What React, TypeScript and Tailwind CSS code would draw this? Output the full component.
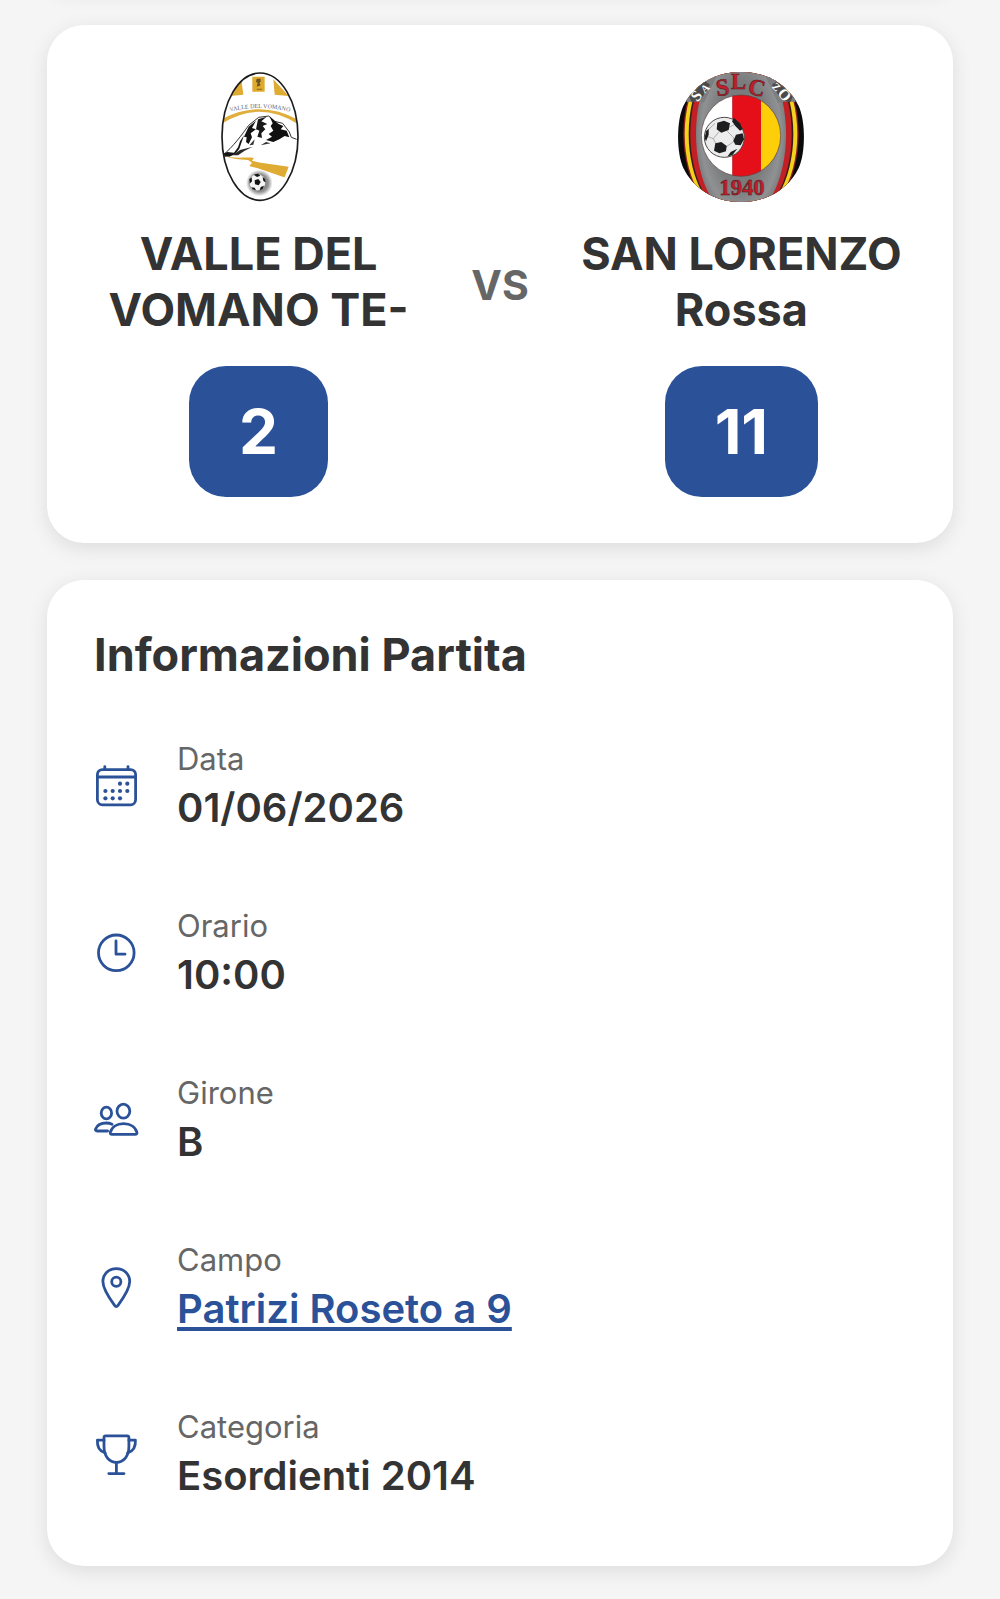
import type { ReactNode } from "react";

const iconClass = "size-[46px] shrink-0 text-[#2b5298]";

function Icon({ children }: { children: ReactNode }) {
  return (
    <svg
      viewBox="1 0 46 46"
      fill="none"
      stroke="currentColor"
      strokeWidth="2.8"
      strokeLinecap="round"
      strokeLinejoin="round"
      className={iconClass}
      aria-hidden="true"
    >
      {children}
    </svg>
  );
}

const CalendarIcon = () => (
  <Icon>
    <rect x="4.4" y="6.6" width="38.2" height="35.2" rx="5" />
    <path d="M4.4 14H42.6M11.8 3.6V6M35 3.6V6" />
    <g fill="currentColor" stroke="none">
      <circle cx="27" cy="20.7" r="2.1" />
      <circle cx="34.3" cy="20.7" r="2.1" />
      <circle cx="12.4" cy="28" r="2.1" />
      <circle cx="19.7" cy="28" r="2.1" />
      <circle cx="27" cy="28" r="2.1" />
      <circle cx="34.3" cy="28" r="2.1" />
      <circle cx="12.4" cy="35.3" r="2.1" />
      <circle cx="19.7" cy="35.3" r="2.1" />
      <circle cx="27" cy="35.3" r="2.1" />
    </g>
  </Icon>
);

const ClockIcon = () => (
  <Icon>
    <circle cx="23.3" cy="22.8" r="17.8" />
    <path d="M23 11V24.2H32" />
  </Icon>
);

const PeopleIcon = () => (
  <Icon>
    <ellipse cx="30.4" cy="14.2" rx="6.4" ry="7" />
    <ellipse cx="13.4" cy="16" rx="5.2" ry="5.9" />
    <path d="M19 37.4H42.2C43.6 37.4 44.2 36.6 43.9 35.4C42.6 30.2 37.6 26.6 30.6 26.6S18.6 30.2 17.3 35.4C17 36.6 17.6 37.4 19 37.4Z" />
    <path d="M14.6 34H4.2C2.8 34 2.2 33.2 2.6 32C4 28.4 8 26 13.4 26C15.6 26 17.4 26.4 19 27.2" />
  </Icon>
);

const PinIcon = () => (
  <Icon>
    <path d="M23.3 42.6C22.6 42.6 22 42 21.4 41.2C16 33.8 9.9 24.6 9.9 17.6C9.9 10 15.8 4.6 23.3 4.6S36.7 10 36.7 17.6C36.7 24.6 30.6 33.8 25.2 41.2C24.6 42 24 42.6 23.3 42.6Z" />
    <circle cx="23.3" cy="17.8" r="4.6" />
  </Icon>
);

const TrophyIcon = () => (
  <Icon>
    <path d="M12.6 4.8H34.2C35.2 4.8 35.9 5.4 35.9 6.4V15.6C35.9 25.4 30.6 31.4 23.4 31.4S11 25.4 11 15.6V6.4C11 5.4 11.6 4.8 12.6 4.8Z" />
    <path d="M11 9.2H4.4C4 15.6 6.6 20.4 12.2 22M35.9 9.2H42.4C42.8 15.6 40.2 20.4 34.6 22" />
    <path d="M23.4 31.4V42.6M15.8 42.6H31" />
  </Icon>
);

function ValleLogo() {
  return (
    <svg viewBox="-16 36 390 390" className="size-[130px] overflow-visible" role="img" aria-label="Valle del Vomano">
      <defs>
        <clipPath id="valle-oval">
          <ellipse cx="182" cy="230" rx="113" ry="191" />
        </clipPath>
        <path id="valle-arc" d="M80 158Q182 130 284 158" />
        <radialGradient id="valle-glow">
          <stop offset="65%" stopColor="#8d8d8d" />
          <stop offset="100%" stopColor="#ffffff" />
        </radialGradient>
      </defs>
      <g clipPath="url(#valle-oval)">
        <rect x="60" y="36" width="240" height="390" fill="#fff" />
        <path d="M92 108L126 58L132 104Z" fill="#dfab32" />
        <path d="M222 58L268 108L226 104Z" fill="#dfab32" />
        <path d="M159 50H196V95H159Z" fill="#dfa92c" />
        <path d="M172 56L184 56L184 66L180 68L184 76L172 80L175 68L170 66Z" fill="#6b5327" />
        <path d="M172 86H188V90H172Z" fill="#9b7527" />
        <path d="M66 192Q180 118 298 194L298 180Q182 116 66 178Z" fill="#dfae3d" />
        <path d="M70 286C100 262 128 224 148 196L178 172L208 168L226 184L250 190L270 216L276 232L292 238" fill="none" stroke="#36322f" strokeWidth="3" />
        <path d="M66 284L84 276L104 278L116 262L122 244L134 226L120 266L108 282L90 290L70 290Z" fill="#161616" />
        <path d="M134 230L148 200L170 182L158 204L170 208L154 220L158 232L148 252L140 246L142 232Z" fill="#141414" />
        <path d="M176 178L202 170L186 184L204 192L190 198L198 208L186 220L188 234L174 230L180 212L170 208Z" fill="#191919" />
        <path d="M210 168L226 182L238 192L252 198L244 208L262 212L270 232L256 228L240 238L222 246L200 240L218 230L208 222L222 212L214 198L220 190Z" fill="#101010" />
        <path d="M100 286L122 270L160 260L136 272L116 286Z" fill="#2b2928" />
        <path d="M150 256L166 238L162 254ZM184 256L200 246L214 250Z" fill="#333" />
        <path d="M72 286C104 298 136 290 164 294L158 302L184 308L268 320L256 352C224 342 196 330 150 318L158 308L146 300C118 298 96 298 72 286Z" fill="#dfab32" />
        <circle cx="180" cy="369" r="40" fill="url(#valle-glow)" />
        <circle cx="174" cy="367" r="25" fill="#f4f4f4" stroke="#777" strokeWidth="1.5" />
        <g fill="#151515">
          <path d="M166 361L177 357L184 366L178 376L167 373Z" />
          <path d="M163 344L176 341L183 347L173 351Z" />
          <path d="M190 351L197 357L199 368L192 362Z" />
          <path d="M150 358L157 352L158 364L151 371Z" />
          <path d="M156 382L166 383L170 391L160 388Z" />
          <path d="M184 381L194 377L190 387L181 391Z" />
        </g>
      </g>
      <ellipse cx="182" cy="230" rx="114" ry="191" fill="none" stroke="#1c1c1c" strokeWidth="5" />
      <text fill="#5f6673" fontSize="18" textAnchor="middle" className="font-['Liberation_Serif',serif]">
        <textPath href="#valle-arc" startOffset="50%">VALLE DEL VOMANO</textPath>
      </text>
    </svg>
  );
}

function SanLorenzoLogo() {
  return (
    <svg viewBox="48 36 390 390" className="size-[130px] overflow-visible" role="img" aria-label="San Lorenzo">
      <defs>
        <clipPath id="slc-round">
          <path d="M243 36C330 36 390 84 416 138C437 184 437 278 416 324C390 378 330 426 243 426S96 378 70 324C49 278 49 184 70 138C96 84 156 36 243 36Z" />
        </clipPath>
        <clipPath id="slc-field">
          <ellipse cx="243" cy="227" rx="119" ry="122" />
        </clipPath>
        <radialGradient id="slc-grey" cx="50%" cy="50%" r="55%">
          <stop offset="55%" stopColor="#7a7b7d" />
          <stop offset="80%" stopColor="#909193" />
          <stop offset="100%" stopColor="#6e6f71" />
        </radialGradient>
      </defs>
      <g clipPath="url(#slc-round)">
        <rect x="48" y="36" width="390" height="390" fill="#0b0a0a" />
        <ellipse cx="243" cy="222" rx="173" ry="270" fill="#8c1d20" />
        <ellipse cx="243" cy="222" rx="169" ry="266" fill="#f2d21c" />
        <ellipse cx="243" cy="222" rx="157" ry="262" fill="#3b1b17" />
        <ellipse cx="243" cy="222" rx="152" ry="260" fill="#c32026" />
        <ellipse cx="243" cy="222" rx="135" ry="256" fill="url(#slc-grey)" />
        <path d="M80 126Q110 122 132 128L176 36H60ZM406 126Q376 122 354 128L310 36H426Z" fill="#7d7e80" />
        <path d="M88 110L134 62L150 74L124 116L96 128ZM398 110L352 62L336 74L362 116L390 128Z" fill="#4a4a4b" />
      </g>
      <g clipPath="url(#slc-field)">
        <rect x="120" y="100" width="97" height="260" fill="#fff" />
        <rect x="217" y="100" width="86" height="260" fill="#e50f19" />
        <rect x="303" y="100" width="66" height="260" fill="#fecf08" />
      </g>
      <ellipse cx="243" cy="227" rx="119" ry="122" fill="none" stroke="#5c4140" strokeWidth="2" />
      <circle cx="193" cy="232" r="60" fill="#ececec" stroke="#4a4a4a" strokeWidth="3" />
      <g fill="none" stroke="#8d8d8d" strokeWidth="2">
        <path d="M178 214L160 236L168 252M202 214L220 232L222 240M160 236L138 228M190 262L202 258L222 244M165 190L144 210M208 202L226 192" />
      </g>
      <g fill="#1d1d1f">
        <path d="M172 188L192 182L210 190L206 210L184 218L170 208Z" />
        <path d="M216 184L222 174L240 190L248 208L240 212L226 198Z" />
        <path d="M166 250L184 246L200 258L198 274L178 280L162 272Z" />
        <path d="M228 224L248 220L252 238L242 256L226 254L220 242Z" />
        <path d="M138 214L146 206L146 224L138 244L134 234Z" />
        <path d="M212 276L232 266L218 284L202 290Z" />
      </g>
      <g
        fill="#c01f2b"
        stroke="#4d1519"
        strokeWidth="1.5"
        textAnchor="middle"
        fontWeight="700"
        className="font-['Liberation_Serif',serif]"
      >
        <text x="188" y="106" fontSize="72" transform="rotate(-8 188 84)">S</text>
        <text x="236" y="88" fontSize="68">L</text>
        <text x="290" y="106" fontSize="70" transform="rotate(12 290 84)">C</text>
        <text x="246" y="404" fontSize="68">1940</text>
      </g>
      <g
        fill="#fff"
        fontSize="46"
        fontWeight="700"
        textAnchor="middle"
        className="font-['Liberation_Serif',serif]"
      >
        <text x="110" y="122" transform="rotate(-50 110 108)">S</text>
        <text x="134" y="96" fontSize="32" transform="rotate(-42 134 84)">A</text>
        <text x="374" y="120" transform="rotate(48 374 104)">O</text>
        <text x="350" y="92" fontSize="32" transform="rotate(42 350 80)">Z</text>
      </g>
    </svg>
  );
}

interface TeamProps {
  logo: ReactNode;
  name: string;
  score: number;
}

function Team({ logo, name, score }: TeamProps) {
  return (
    <div className="flex min-w-0 flex-1 flex-col items-center">
      {logo}
      <h2 className="mt-6 text-center text-[45px] leading-14 font-bold text-[#333]">{name}</h2>
      <div className="mt-7 rounded-[37px] bg-[#2b5298] px-[50px] py-7 text-[62px] leading-[75px] font-bold text-white">
        {score}
      </div>
    </div>
  );
}

const details = [
  { label: "Data", value: "01/06/2026", icon: <CalendarIcon /> },
  { label: "Orario", value: "10:00", icon: <ClockIcon /> },
  { label: "Girone", value: "B", icon: <PeopleIcon /> },
  { label: "Campo", value: "Patrizi Roseto a 9", icon: <PinIcon />, href: "#campo" },
  { label: "Categoria", value: "Esordienti 2014", icon: <TrophyIcon /> },
];

export default function App() {
  return (
    <main className="flex min-h-screen flex-col gap-[37px] overflow-hidden bg-[#f5f5f5] px-[47px] pb-8 font-[Inter,sans-serif]">
      {/* Tail of the card that is scrolled off the top */}
      <div className="-mt-[60px] h-12 shrink-0 rounded-[37px] bg-white shadow-[0_5px_20px_rgba(0,0,0,0.1)]" />

      {/* Score */}
      <section className="flex items-center rounded-[37px] bg-white px-[47px] pt-[47px] pb-[46px] shadow-[0_5px_20px_rgba(0,0,0,0.1)]">
        <Team logo={<ValleLogo />} name="VALLE DEL VOMANO TE-" score={2} />
        <span className="px-12 text-[41px] leading-[50px] font-bold text-[#666]">VS</span>
        <Team logo={<SanLorenzoLogo />} name="SAN LORENZO Rossa" score={11} />
      </section>

      {/* Match info */}
      <section className="rounded-[37px] bg-white px-[47px] pt-[47px] pb-[66px] shadow-[0_5px_20px_rgba(0,0,0,0.1)]">
        <h2 className="text-[45px] leading-14 font-bold text-[#333]">Informazioni Partita</h2>
        <ul className="mt-14 flex flex-col gap-[74px]">
          {details.map((item) => (
            <li key={item.label} className="flex items-center gap-[37px]">
              {item.icon}
              <div className="flex flex-col items-start gap-1">
                <span className="text-[31px] leading-10 text-[#666]">{item.label}</span>
                {item.href ? (
                  <a
                    href={item.href}
                    className="text-[40px] leading-[49px] font-semibold text-[#2b5298] underline decoration-4 underline-offset-4"
                  >
                    {item.value}
                  </a>
                ) : (
                  <span className="text-[40px] leading-[49px] font-semibold text-[#333]">{item.value}</span>
                )}
              </div>
            </li>
          ))}
        </ul>
      </section>
    </main>
  );
}
